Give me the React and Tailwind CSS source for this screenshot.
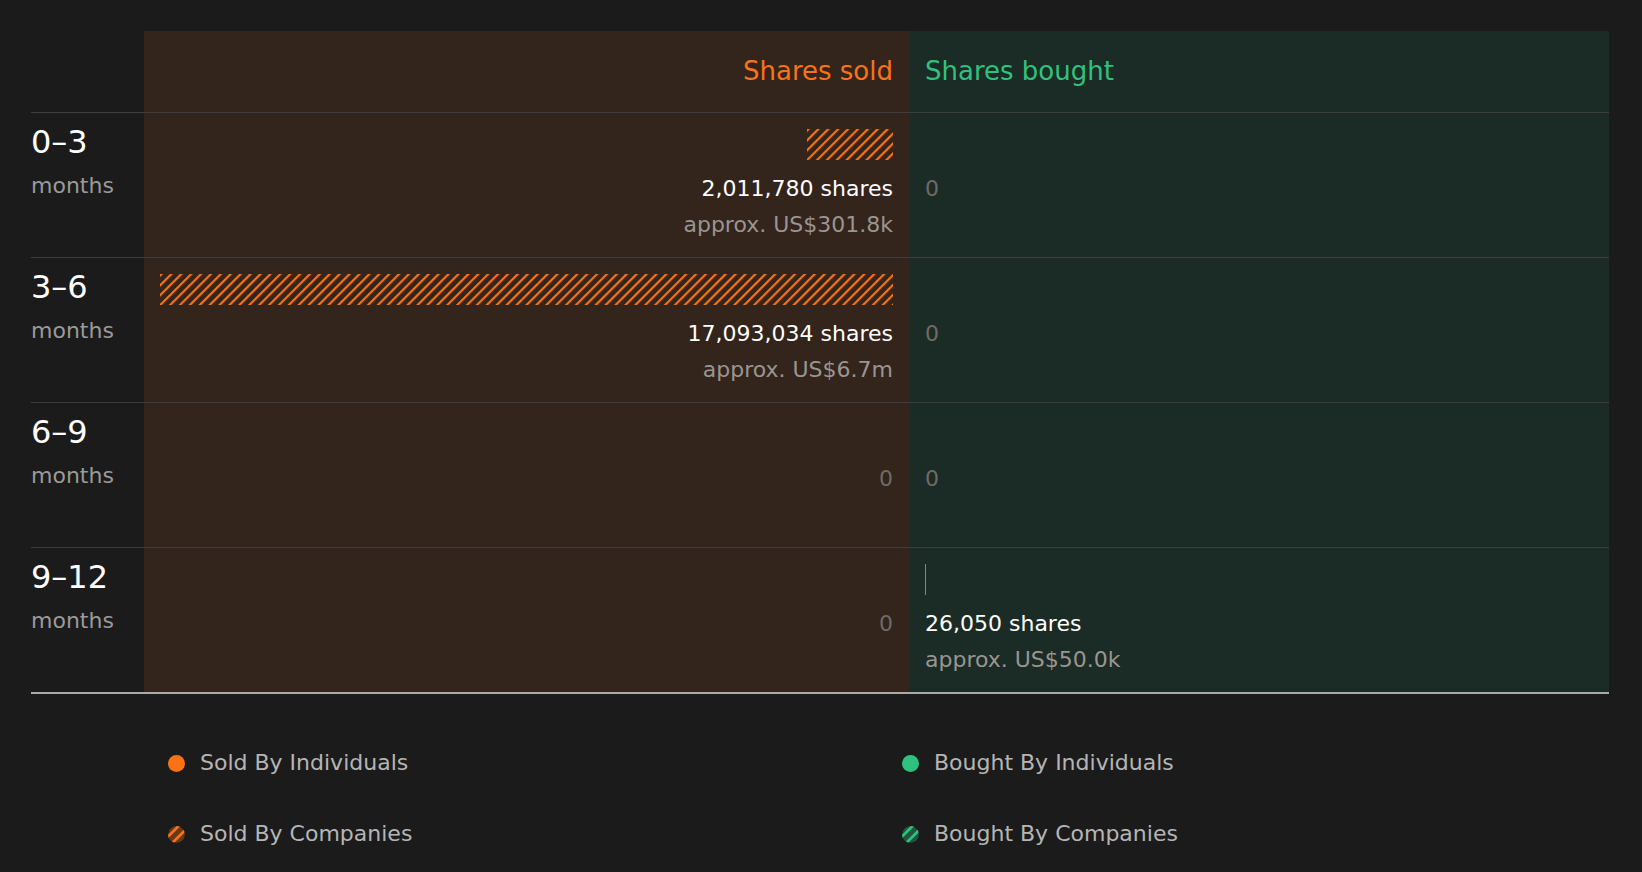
const F = { fontFamily: '"DejaVu Sans", Verdana, sans-serif' };

function Hatch({ color, width }) {
  const id = 'h' + color.replace('#', '') + width;
  return (
    <svg width={width} height="31" className="block">
      <defs>
        <pattern id={id} width="7" height="7" patternUnits="userSpaceOnUse" patternTransform="rotate(45)">
          <rect width="2.2" height="7" fill={color} />
        </pattern>
      </defs>
      <rect width={width} height="31" fill={`url(#${id})`} />
    </svg>
  );
}

const rows = [
  { a: '0–3', sold: 2011780, soldV: 'US$301.8k', bought: 0 },
  { a: '3–6', sold: 17093034, soldV: 'US$6.7m', bought: 0 },
  { a: '6–9', sold: 0, bought: 0 },
  { a: '9–12', sold: 0, bought: 26050, boughtV: 'US$50.0k' },
];
const MAX = 17093034;

function Cell({ side, val, v }) {
  const sold = side === 'sold';
  return (
    <div className={`h-[144px] pt-[16px] flex flex-col ${sold ? 'bg-[#33241c] items-end pr-[16px]' : 'bg-[#1b2b25] items-start pl-[16px]'}`}>
      <div className="h-[31px]">
        {val > 0 && (sold
          ? <Hatch color="#f97316" width={Math.max(1, Math.round((val / MAX) * 733))} />
          : <div className="w-px h-[31px] bg-[#2bb57a]" />)}
      </div>
      {val > 0 ? (
        <>
          <div className="mt-[16px] text-[22px] leading-[26px] text-white">{val.toLocaleString('en-US')} shares</div>
          <div className="mt-[10px] text-[22px] leading-[26px] text-[#9a9590]">approx. {v}</div>
        </>
      ) : (
        <div className="mt-[16px] text-[22px] leading-[26px] text-[#706a65]">0</div>
      )}
    </div>
  );
}

function Legend({ color, hatch, label }) {
  return (
    <div className="flex items-center gap-[15px] text-[22px] leading-[26px] text-[#b5b5b5]">
      {hatch ? (
        <svg width="17" height="17" viewBox="0 0 16 16">
          <defs><clipPath id={'c' + color.slice(1)}><circle cx="8" cy="8" r="8" /></clipPath></defs>
          <g clipPath={`url(#c${color.slice(1)})`}>
            <circle cx="8" cy="8" r="8" fill={color} opacity="0.35" />
            <path d="M-2 12 L12 -2 M3 17 L17 3" stroke={color} strokeWidth="2.5" />
          </g>
        </svg>
      ) : (
        <div className="w-[17px] h-[17px] rounded-full" style={{ background: color }} />
      )}
      <span>{label}</span>
    </div>
  );
}

export default function App() {
  return (
    <div className="w-[1642px] h-[872px] bg-[#1b1b1b] pt-[31px] px-[31px]" style={F}>
      <div className="w-[1578px]">
        <div className="grid grid-cols-[113px_765px_700px] h-[81px]">
          <div />
          <div className="bg-[#33241c] flex items-center justify-end pr-[16px] text-[26px] text-[#f97316]">Shares sold</div>
          <div className="bg-[#1b2b25] flex items-center pl-[16px] text-[26px] text-[#2ec27e]">Shares bought</div>
        </div>
        {rows.map((r, i) => (
          <div key={i} className="grid grid-cols-[113px_765px_700px] border-t border-[#3d3d3d]">
            <div className="pt-[10px]">
              <div className="text-[32px] leading-[38px] text-white">{r.a}</div>
              <div className="mt-[12px] text-[22px] leading-[26px] text-[#9a9a9a]">months</div>
            </div>
            <Cell side="sold" val={r.sold} v={r.soldV} />
            <Cell side="bought" val={r.bought} v={r.boughtV} />
          </div>
        ))}
        <div className="border-t-2 border-[#aaaaaa]" />
        <div className="grid grid-cols-[734px_auto] pl-[137px] mt-[56px] gap-y-[45px]">
          <Legend color="#f97316" label="Sold By Individuals" />
          <Legend color="#2ec27e" label="Bought By Individuals" />
          <Legend color="#f97316" hatch label="Sold By Companies" />
          <Legend color="#2ec27e" hatch label="Bought By Companies" />
        </div>
      </div>
    </div>
  );
}
